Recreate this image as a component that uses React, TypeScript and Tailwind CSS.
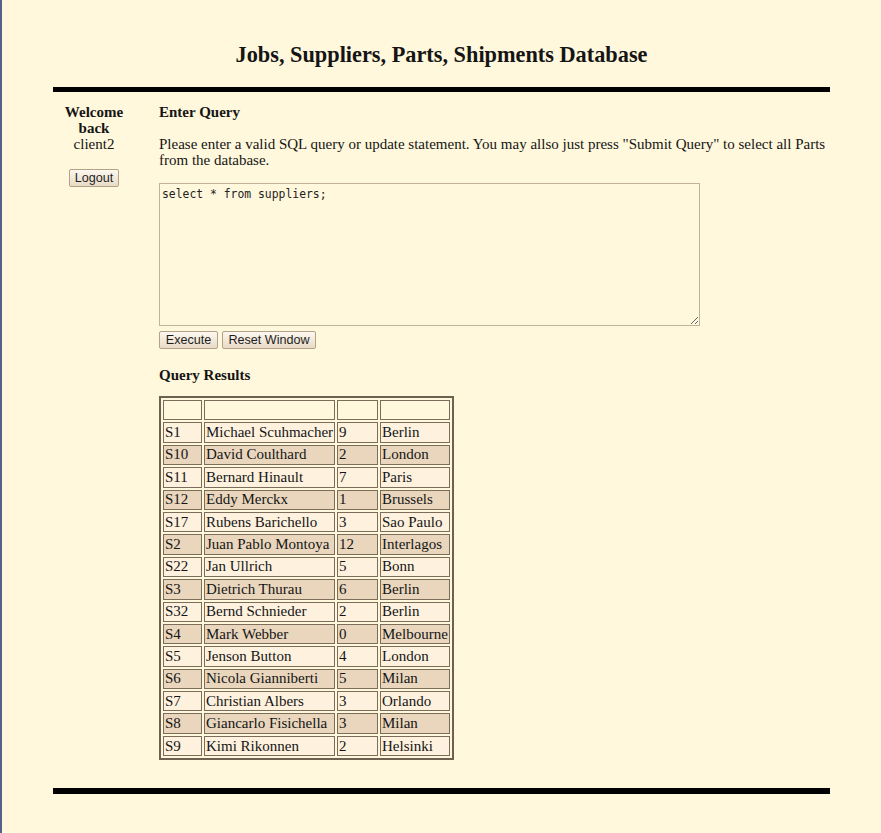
import React from "react";

const rows: [string, string, string, string][] = [
  ["S1", "Michael Scuhmacher", "9", "Berlin"],
  ["S10", "David Coulthard", "2", "London"],
  ["S11", "Bernard Hinault", "7", "Paris"],
  ["S12", "Eddy Merckx", "1", "Brussels"],
  ["S17", "Rubens Barichello", "3", "Sao Paulo"],
  ["S2", "Juan Pablo Montoya", "12", "Interlagos"],
  ["S22", "Jan Ullrich", "5", "Bonn"],
  ["S3", "Dietrich Thurau", "6", "Berlin"],
  ["S32", "Bernd Schnieder", "2", "Berlin"],
  ["S4", "Mark Webber", "0", "Melbourne"],
  ["S5", "Jenson Button", "4", "London"],
  ["S6", "Nicola Gianniberti", "5", "Milan"],
  ["S7", "Christian Albers", "3", "Orlando"],
  ["S8", "Giancarlo Fisichella", "3", "Milan"],
  ["S9", "Kimi Rikonnen", "2", "Helsinki"],
];

const btn =
  "h-[18px] border border-[#b3a286] rounded-[2px] bg-gradient-to-b from-[#fdf8f0] to-[#e8dac6] text-[12.6px] leading-none text-[#1e1e1e] font-['Liberation_Sans',Arial,sans-serif]";

const cell =
  "h-[20.4px] whitespace-nowrap border border-[#7c6d5a] px-[1px] py-0 text-left align-middle";

export default function App() {
  return (
    <div className="min-h-[833px] border-l-2 border-[#55608c] bg-[#fff8dc] text-[#151515] font-['Liberation_Serif','Times_New_Roman',serif]">
      <h1 className="pt-[42px] text-center text-[22.3px] font-bold leading-[26px]">
        Jobs, Suppliers, Parts, Shipments Database
      </h1>

      <div className="mx-auto w-[777px]">
        <div className="mt-[19px] h-[5px] bg-black" />

        <div className="mt-[12px] flex">
          {/* sidebar */}
          <div className="w-[82px] flex flex-col items-center text-center text-[15px] leading-[16px]">
            <div className="font-bold">Welcome back</div>
            <div>client2</div>
            <button className={`${btn} mt-[17px] w-[50px]`}>Logout</button>
          </div>

          {/* main */}
          <div className="ml-[24px] flex-1 text-[15px] leading-[16px]">
            <div className="font-bold">Enter Query</div>
            <p className="mt-[16px] pr-[4px]">
              Please enter a valid SQL query or update statement. You may allso just press "Submit Query" to select all
              Parts from the database.
            </p>
            <textarea
              className="mt-[15px] block h-[143px] w-[541px] border border-[#c2b296] bg-[#fff8dc] px-[2px] pt-[3px] text-[11.4px] leading-[14px] text-[#222] outline-none font-['DejaVu_Sans_Mono',monospace]"
              defaultValue="select * from suppliers;"
            />
            <div className="mt-[5px] flex gap-[4px]">
              <button className={`${btn} w-[59px]`}>Execute</button>
              <button className={`${btn} w-[94px]`}>Reset Window</button>
            </div>

            <div className="mt-[18px] font-bold">Query Results</div>

            <table className="mt-[13px] border-separate border-spacing-[2px] border-2 border-[#6f6150] text-[15px] leading-[17px]">
              <tbody>
                <tr className="bg-[#fff8dc]">
                  <td className={`${cell} w-[39px]`}></td>
                  <td className={`${cell} w-[130px]`}></td>
                  <td className={`${cell} w-[41px]`}></td>
                  <td className={`${cell} w-[70px]`}></td>
                </tr>
                {rows.map((r, i) => (
                  <tr key={r[0]} className={i % 2 === 0 ? "bg-[#fef1de]" : "bg-[#e9d6bd]"}>
                    {r.map((v, j) => (
                      <td key={j} className={cell}>
                        {v}
                      </td>
                    ))}
                  </tr>
                ))}
              </tbody>
            </table>
          </div>
        </div>

        <div className="mt-[28px] h-[6px] bg-black" />
      </div>
    </div>
  );
}
